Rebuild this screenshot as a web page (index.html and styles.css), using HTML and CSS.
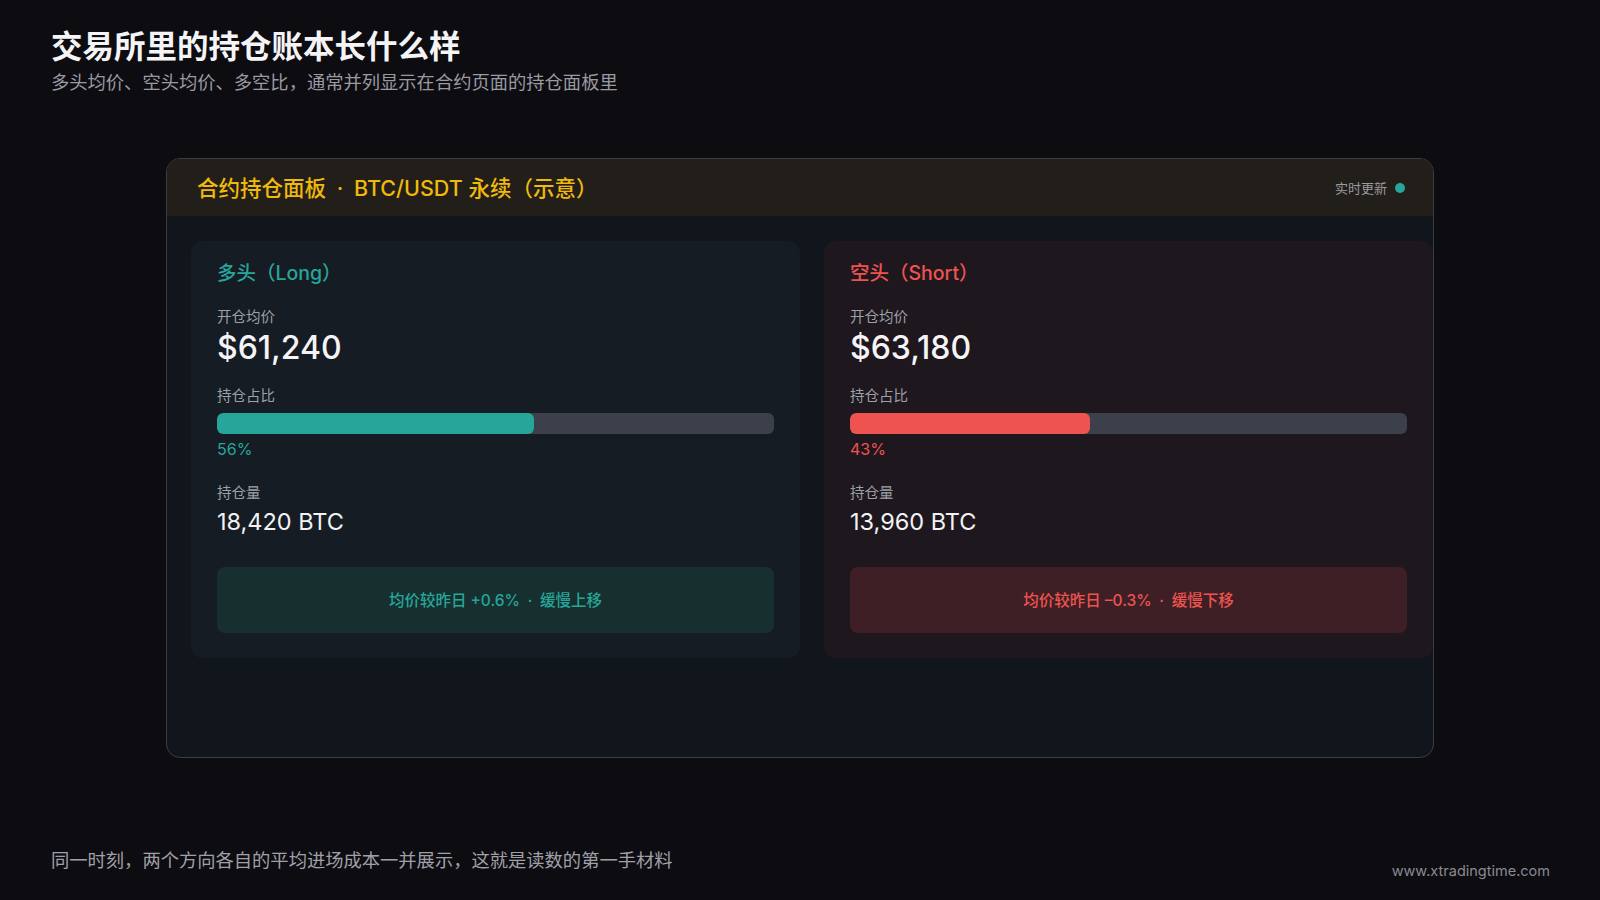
FILE: index.html
```html
<!DOCTYPE html>
<html lang="zh-CN">
<head>
    <meta charset="UTF-8">
    <meta name="viewport" content="width=device-width, initial-scale=1.0">
    <title>交易所里的持仓账本长什么样</title>
    <link rel="stylesheet" href="styles.css">
</head>
<body>
    <div class="page">
        <header class="intro">
            <h1>交易所里的持仓账本长什么样</h1>
            <p class="subtitle">多头均价、空头均价、多空比，通常并列显示在合约页面的持仓面板里</p>
        </header>

        <section class="panel">
            <div class="panel-head">
                <span class="panel-title">合约持仓面板&ensp;·&ensp;BTC/USDT 永续（示意）</span>
                <span class="live">实时更新 <i class="live-dot"></i></span>
            </div>

            <div class="sides">
                <div class="side long">
                    <div class="side-title">多头（Long）</div>
                    <div class="label">开仓均价</div>
                    <div class="price">$61,240</div>
                    <div class="label ratio-label">持仓占比</div>
                    <div class="bar"><div class="bar-fill" style="width: 57%"></div></div>
                    <div class="pct">56%</div>
                    <div class="label amount-label">持仓量</div>
                    <div class="amount">18,420 BTC</div>
                    <div class="note">均价较昨日 +0.6%&ensp;·&ensp;缓慢上移</div>
                </div>

                <div class="side short">
                    <div class="side-title">空头（Short）</div>
                    <div class="label">开仓均价</div>
                    <div class="price">$63,180</div>
                    <div class="label ratio-label">持仓占比</div>
                    <div class="bar"><div class="bar-fill" style="width: 43%"></div></div>
                    <div class="pct">43%</div>
                    <div class="label amount-label">持仓量</div>
                    <div class="amount">13,960 BTC</div>
                    <div class="note">均价较昨日 –0.3%&ensp;·&ensp;缓慢下移</div>
                </div>
            </div>
        </section>

        <footer class="foot">
            <p class="foot-text">同一时刻，两个方向各自的平均进场成本一并展示，这就是读数的第一手材料</p>
            <span class="site">www.xtradingtime.com</span>
        </footer>
    </div>
</body>
</html>
```

FILE: styles.css
```css
body {
    margin: 0;
    background-color: #0c0c11;
    font-family: Inter, "Noto Sans CJK SC", sans-serif;
    color: #f2f2f4;
}

.page {
    width: 1600px;
    height: 900px;
    box-sizing: border-box;
    padding: 28px 50px 0 51px;
    display: flex;
    flex-direction: column;
}

h1 {
    margin: 0;
    font-size: 31.5px;
    line-height: 38px;
    font-weight: bold;
    color: #f4f4f6;
}

.subtitle {
    margin: 4px 0 0;
    font-size: 18.3px;
    line-height: 24px;
    color: #9a9aa2;
}

.panel {
    width: 1268px;
    height: 600px;
    box-sizing: border-box;
    margin: 64px 0 0 115px;
    background-color: #11151c;
    border: 1px solid #3a3d44;
    border-radius: 14px;
    overflow: hidden;
}

.panel-head {
    height: 57px;
    display: flex;
    align-items: center;
    justify-content: space-between;
    padding: 0 28px 0 30px;
    background-color: #221f1a;
}

.panel-title {
    color: #f0b90b;
    font-size: 21.5px;
    font-weight: 500;
    padding-bottom: 2px;
}

.live {
    display: flex;
    align-items: center;
    gap: 8px;
    color: #9a9aa0;
    font-size: 13px;
}

.live-dot {
    width: 10px;
    height: 10px;
    border-radius: 50%;
    background-color: #26a69a;
}

.sides {
    display: flex;
    gap: 24px;
    padding: 25px 24px 0;
}

.side {
    flex: 0 0 609px;
    height: 417px;
    box-sizing: border-box;
    padding: 20px 26px 0;
    border-radius: 12px;
    display: flex;
    flex-direction: column;
}

.long {
    background-color: #161c23;
}

.short {
    background-color: #1f171e;
}

.side-title {
    font-size: 19.5px;
    line-height: 24px;
    font-weight: 500;
}

.long .side-title, .long .pct, .long .note {
    color: #26a69a;
}

.short .side-title, .short .pct, .short .note {
    color: #ef5350;
}

.label {
    margin-top: 22px;
    font-size: 14.5px;
    line-height: 20px;
    color: #9ca0a8;
}

.price {
    margin-top: 2px;
    font-size: 32px;
    line-height: 38px;
    font-weight: 500;
    color: #f4f4f6;
}

.ratio-label {
    margin-top: 19px;
}

.bar {
    margin-top: 7px;
    height: 21px;
    border-radius: 6px;
    background-color: #3c404a;
    overflow: hidden;
}

.bar-fill {
    height: 100%;
    border-radius: 6px;
}

.long .bar-fill {
    background-color: #26a69a;
}

.short .bar-fill {
    background-color: #ef5350;
}

.pct {
    margin-top: 5px;
    font-size: 16px;
    line-height: 20px;
}

.amount-label {
    margin-top: 24px;
}

.amount {
    margin-top: 5px;
    font-size: 23.5px;
    line-height: 28px;
    color: #f2f2f4;
}

.note {
    margin-top: 31px;
    height: 66px;
    box-sizing: border-box;
    padding-bottom: 3px;
    border-radius: 8px;
    display: flex;
    align-items: center;
    justify-content: center;
    font-size: 15.5px;
    font-weight: 500;
}

.long .note {
    background-color: #17302f;
}

.short .note {
    background-color: #3d1f25;
}

.foot {
    margin-top: auto;
    display: flex;
    align-items: flex-end;
    justify-content: space-between;
    padding-bottom: 19px;
}

.foot-text {
    margin: 0 0 8px;
    font-size: 18.3px;
    line-height: 25px;
    color: #a0a0a8;
}

.site {
    font-size: 14.5px;
    line-height: 20px;
    color: #8a8a92;
}
```
